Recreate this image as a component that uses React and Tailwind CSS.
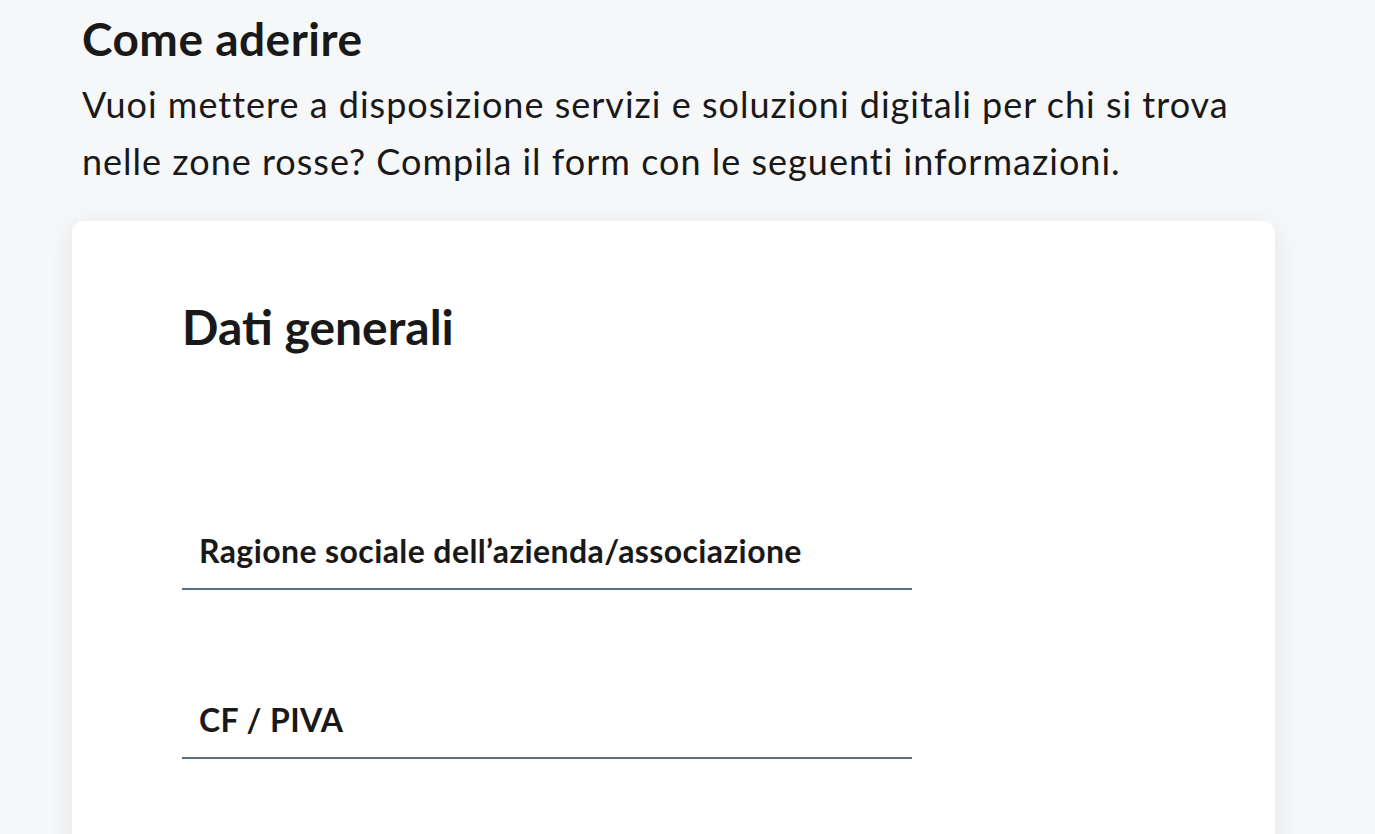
import React from 'react';

const Field = ({ label }) => (
  <div className="w-[730px] border-b-2 border-[#5c6f82] pb-[17px] pl-[17px]">
    <label className="block text-[32px] font-bold leading-[40px] tracking-[0.4px] text-[#191919]">
      {label}
    </label>
  </div>
);

export default function App() {
  return (
    <div
      className="min-h-[834px] overflow-hidden bg-[#f6f7f9] text-[#191919]"
      style={{ fontFamily: 'Lato, "Open Sans", sans-serif' }}
    >
      <div className="w-[1203px] ml-[72px] pt-[11px]">
        {/* Intro */}
        <div className="pl-[10px]">
          <h2 className="text-[46px] font-bold leading-[56px] tracking-[0.5px]">Come aderire</h2>
          <p className="mt-[9px] text-[36px] leading-[57px] tracking-[1px]">
            Vuoi mettere a disposizione servizi e soluzioni digitali per chi si trova
            <br />
            nelle zone rosse? Compila il form con le seguenti informazioni.
          </p>
        </div>

        {/* Form card */}
        <div className="mt-[31px] h-[700px] rounded-xl bg-white pl-[110px] pt-[78px] shadow-[0_6px_28px_rgba(0,0,0,0.08)]">
          <h3 className="text-[48px] font-bold leading-[56px]">Dati generali</h3>

          <div className="mt-[176px] flex flex-col gap-[110px]">
            <Field label="Ragione sociale dell’azienda/associazione" />
            <Field label="CF / PIVA" />
          </div>
        </div>
      </div>
    </div>
  );
}
